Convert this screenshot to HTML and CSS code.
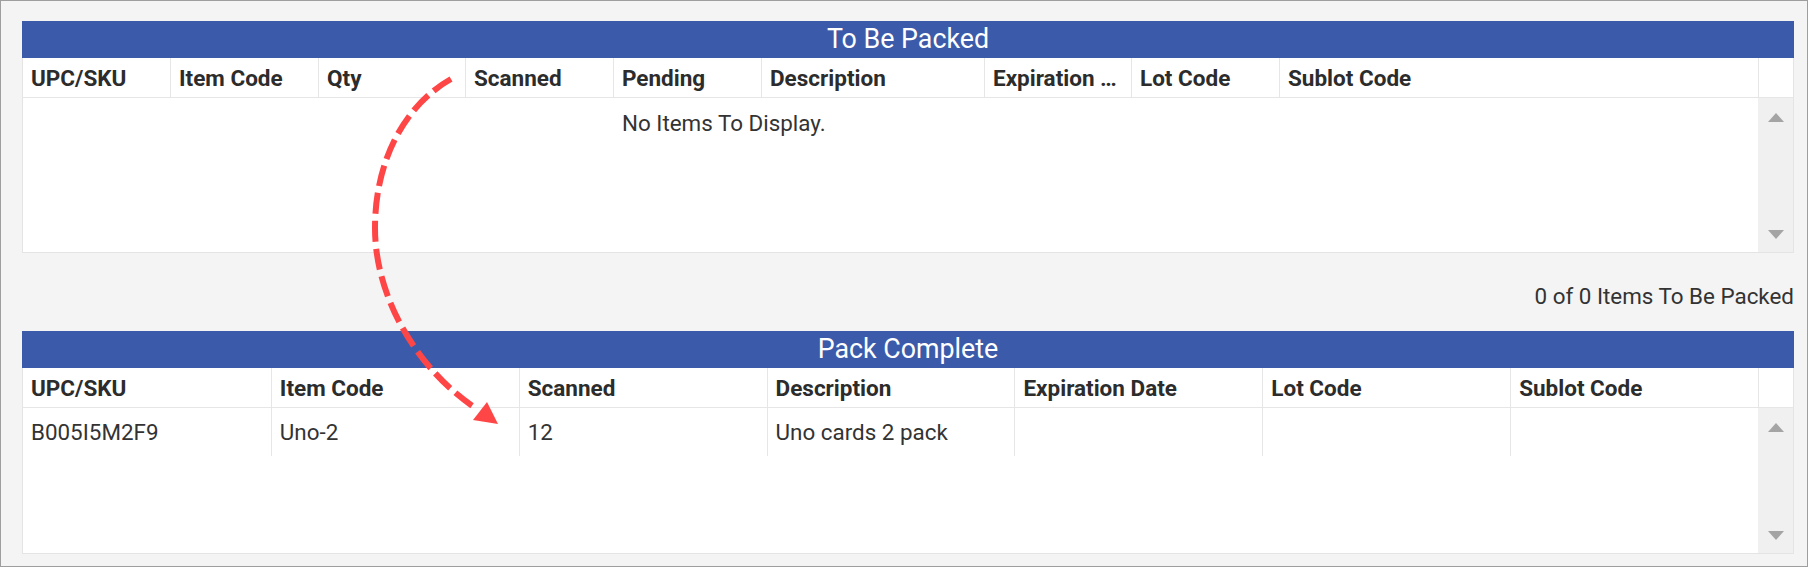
FILE: index.html
```html
<!DOCTYPE html>
<html lang="en">
<head>
<meta charset="utf-8">
<title>Packing</title>
<link rel="stylesheet" href="styles.css">
</head>
<body>
<div class="frame">
  <section class="panel">
    <div class="panel-title">To Be Packed</div>
    <div class="grid">
      <div class="row head cols-top">
        <div class="cell">UPC/SKU</div>
        <div class="cell">Item Code</div>
        <div class="cell">Qty</div>
        <div class="cell">Scanned</div>
        <div class="cell">Pending</div>
        <div class="cell">Description</div>
        <div class="cell">Expiration Date</div>
        <div class="cell">Lot Code</div>
        <div class="cell">Sublot Code</div>
        <div class="cell"></div>
      </div>
      <div class="grid-body body-top">
        <div class="rows">
          <div class="row data cols-top-rows">
            <div class="cell empty-msg">No Items To Display.</div>
          </div>
        </div>
        <div class="scrollbar"><span class="tri-up"></span><span class="tri-down"></span></div>
      </div>
    </div>
  </section>

  <div class="summary">0 of 0 Items To Be Packed</div>

  <section class="panel">
    <div class="panel-title">Pack Complete</div>
    <div class="grid">
      <div class="row head cols-bottom">
        <div class="cell">UPC/SKU</div>
        <div class="cell">Item Code</div>
        <div class="cell">Scanned</div>
        <div class="cell">Description</div>
        <div class="cell">Expiration Date</div>
        <div class="cell">Lot Code</div>
        <div class="cell">Sublot Code</div>
        <div class="cell"></div>
      </div>
      <div class="grid-body body-bottom">
        <div class="rows">
          <div class="row data cols-bottom-rows">
            <div class="cell">B005I5M2F9</div>
            <div class="cell">Uno-2</div>
            <div class="cell">12</div>
            <div class="cell">Uno cards 2 pack</div>
            <div class="cell"></div>
            <div class="cell"></div>
            <div class="cell"></div>
          </div>
        </div>
        <div class="scrollbar"><span class="tri-up"></span><span class="tri-down"></span></div>
      </div>
    </div>
  </section>

  <svg class="annotation" width="1808" height="567" viewBox="0 0 1808 567" xmlns="http://www.w3.org/2000/svg">
    <path d="M451 79 C405 105 375 160 375 228 C375 300 420 372 477 409" fill="none" stroke="#ff4646" stroke-width="6" stroke-dasharray="21 7"/>
    <polygon points="498,424 473,420 487,402" fill="#ff4646"/>
  </svg>
</div>
</body>
</html>
```

FILE: styles.css
```css
* {
  box-sizing: border-box;
}

body {
  margin: 0;
  font-family: "Roboto", "Liberation Sans", sans-serif;
  background: #f4f4f4;
}

.frame {
  position: relative;
  width: 1808px;
  height: 567px;
  border: 1px solid #9e9e9e;
  background: #f4f4f4;
  padding: 20px 13px 12px 21px;
}

.panel-title {
  height: 37px;
  line-height: 37px;
  background: #3b5baa;
  color: #ffffff;
  font-size: 26.8px;
  text-align: center;
}

.grid {
  background: #ffffff;
  border: 1px solid #e4e4e4;
  border-top: none;
}

.row {
  display: grid;
}

.cols-top {
  grid-template-columns: 147px 148px 147px 148px 148px 223px 147px 148px 1fr 35px;
}

.cols-top-rows {
  grid-template-columns: 147px 148px 147px 148px 148px 223px 147px 148px 1fr;
}

.cols-bottom {
  grid-template-columns: repeat(7, 1fr) 35px;
}

.cols-bottom-rows {
  grid-template-columns: repeat(7, 1fr);
}

.cell {
  padding: 0 8px;
  border-left: 1px solid #e6e6e6;
  white-space: nowrap;
  overflow: hidden;
  text-overflow: ellipsis;
}

.cell:first-child {
  border-left: none;
}

.head {
  height: 40px;
  border-bottom: 1px solid #e6e6e6;
}

.head .cell {
  line-height: 40px;
  font-size: 22.5px;
  font-weight: 700;
  color: #2c2c2c;
}

.data .cell {
  height: 48px;
  line-height: 49px;
  font-size: 22.4px;
  color: #333333;
}

.empty-msg {
  grid-column: 5 / -1;
}

.data .cell.empty-msg {
  border-left: none;
  padding-left: 9px;
  line-height: 51px;
}

.grid-body {
  display: flex;
}

.body-top {
  height: 154px;
}

.body-bottom {
  height: 145px;
}

.rows {
  flex: 1;
}

.scrollbar {
  width: 35px;
  background: #f0f0f0;
  display: flex;
  flex-direction: column;
  align-items: center;
  justify-content: space-between;
  padding: 15px 0 13px;
}

.tri-up {
  width: 0;
  height: 0;
  border-left: 8.5px solid transparent;
  border-right: 8.5px solid transparent;
  border-bottom: 9px solid #a4a4a4;
}

.tri-down {
  width: 0;
  height: 0;
  border-left: 8.5px solid transparent;
  border-right: 8.5px solid transparent;
  border-top: 9px solid #a4a4a4;
}

.summary {
  padding: 30px 0 22px;
  line-height: 26px;
  font-size: 22.4px;
  color: #333333;
  text-align: right;
}

.annotation {
  position: absolute;
  left: -1px;
  top: -1px;
  pointer-events: none;
}
```
